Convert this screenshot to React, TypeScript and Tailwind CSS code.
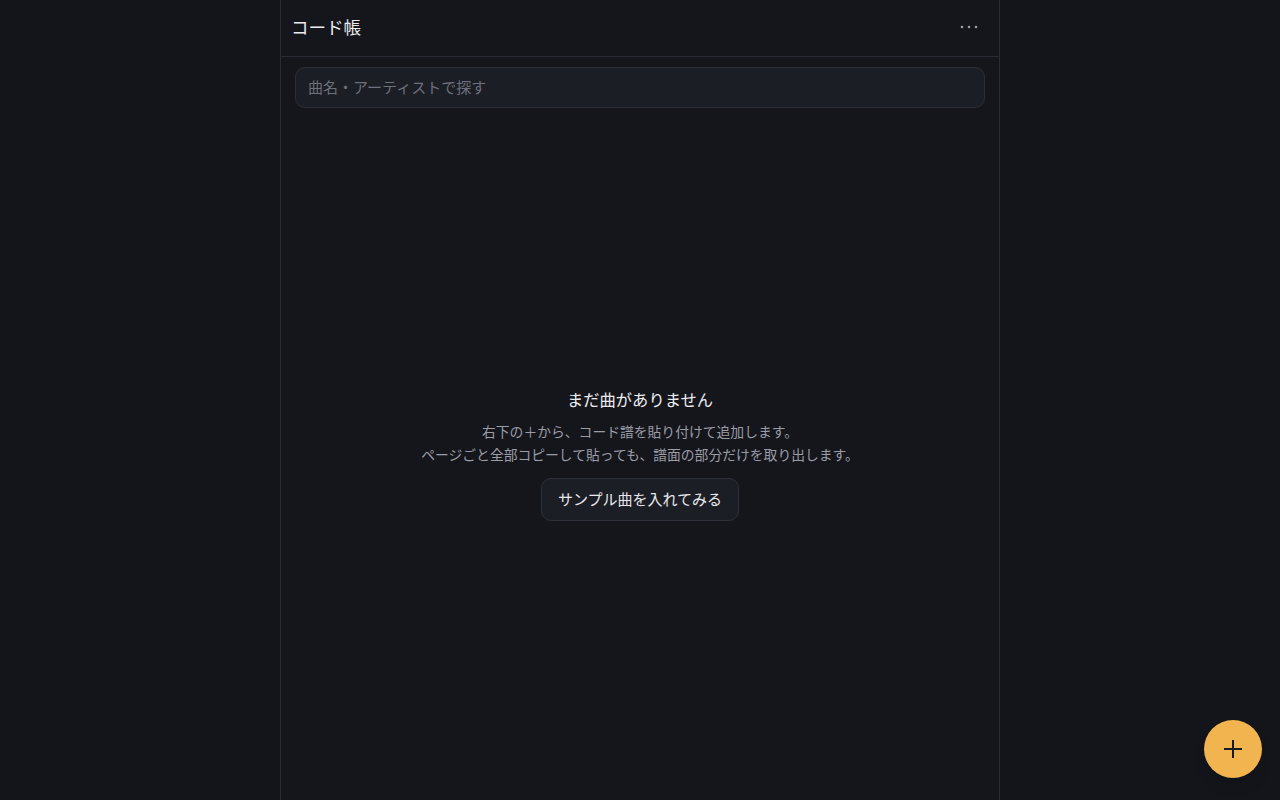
import { useState } from 'react';

const font = { fontFamily: '"Noto Sans CJK JP", "Noto Sans", sans-serif' };

export default function App() {
  const [query, setQuery] = useState('');

  return (
    <div className="min-h-screen w-full bg-[#14151b] text-[#e8e8ec]" style={font}>
      <div className="mx-auto flex h-screen w-[720px] flex-col border-x border-[#2a2c35] bg-[#15161c]">
        <header className="flex h-[57px] shrink-0 items-center justify-between border-b border-[#2a2c35] pb-[2px] pl-2.5 pr-3">
          <h1 className="text-[17.5px] font-normal text-[#ececf0]">コード帳</h1>
          <button className="flex h-8 w-9 items-center justify-center rounded-md">
            <svg width="18" height="4" viewBox="0 0 18 4" fill="#9a9ca6">
              <circle cx="2" cy="2" r="1.3" />
              <circle cx="9" cy="2" r="1.3" />
              <circle cx="16" cy="2" r="1.3" />
            </svg>
          </button>
        </header>

        <div className="px-3.5 pt-2.5">
          <input
            value={query}
            onChange={(e) => setQuery(e.target.value)}
            placeholder="曲名・アーティストで探す"
            className="h-[41px] w-full rounded-[10px] border border-[#2c2e37] bg-[#1c1e25] px-3 pb-[2px] text-[15px] text-[#e8e8ec] outline-none placeholder:text-[#6d707a]"
          />
        </div>

        <div className="flex flex-1 flex-col items-center justify-center text-center">
          <p className="text-[16.3px] text-[#ececf0]">まだ曲がありません</p>
          <p className="mt-2 text-[13.8px] leading-[23px] text-[#9a9ca6]">
            右下の＋から、コード譜を貼り付けて追加します。
            <br />
            ページごと全部コピーして貼っても、譜面の部分だけを取り出します。
          </p>
          <button className="mt-3 h-[43px] rounded-[10px] border border-[#2e3039] bg-[#1c1e25] px-4 text-[15px] text-[#e8e8ec]">
            サンプル曲を入れてみる
          </button>
        </div>
      </div>

      <button className="fixed bottom-[22px] right-[18px] flex h-[58px] w-[58px] items-center justify-center rounded-full bg-[#f2b44e] shadow-lg">
        <svg width="20" height="20" viewBox="0 0 20 20" fill="none" stroke="#1a1b20" strokeWidth="2">
          <path d="M10 1v18M1 10h18" />
        </svg>
      </button>
    </div>
  );
}
